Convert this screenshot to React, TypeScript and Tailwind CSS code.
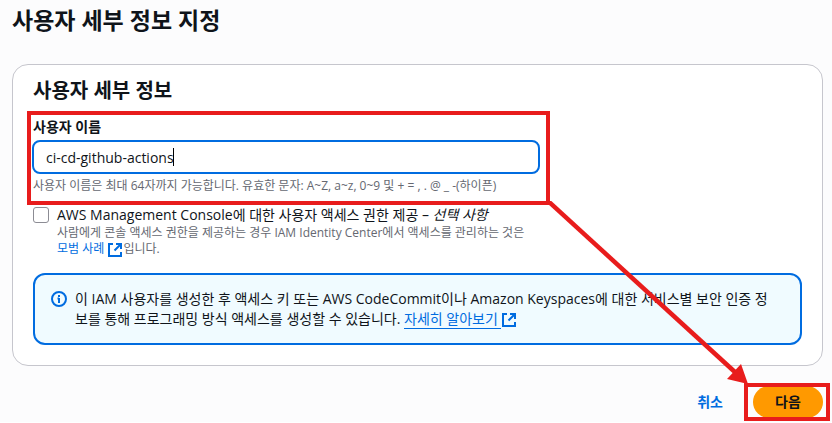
import React from "react";

function ExternalIcon({ className = "" }: { className?: string }) {
  return (
    <svg
      viewBox="0 0 16 16"
      className={`inline-block h-4 w-4 fill-none stroke-[#006ce0] stroke-2 ${className}`}
      aria-hidden="true"
    >
      <path d="M14 10v4H2V2h4" />
      <path d="M9 2h5v5M7.5 8.5L14 2" />
    </svg>
  );
}

function InfoIcon() {
  return (
    <svg viewBox="0 0 16 16" className="mt-0.5 h-4 w-4 shrink-0 fill-none stroke-[#006ce0] stroke-2" aria-hidden="true">
      <circle cx="8" cy="8" r="7" />
      <path d="M8 12V7M6.5 7.5H8" />
      <path d="M8 4v2" />
    </svg>
  );
}

export default function App() {
  return (
    <main className="relative overflow-hidden bg-[#fcfcfd] pt-1 pr-[9px] pb-1 pl-3 font-['Open_Sans','Noto_Sans_CJK_KR',sans-serif] text-sm leading-5 text-[#0f141a]">
      <h1 className="text-[23px] leading-8 font-bold">사용자 세부 정보 지정</h1>

      <section className="mt-7 rounded-2xl border border-[#c6c6cd] bg-white px-5 pt-3.5 pb-5">
        <h2 className="text-xl leading-6 font-bold">사용자 세부 정보</h2>

        <div className="relative mt-3.5 w-[507px]">
          <label htmlFor="user-name" className="block font-bold">
            사용자 이름
          </label>
          <div className="relative -ml-px mt-[3px]">
            <input
              id="user-name"
              type="text"
              defaultValue="ci-cd-github-actions"
              className="block h-[34px] w-full rounded-lg border-2 border-[#006ce0] bg-white px-3 outline-none"
            />
            <span className="absolute top-2 left-[141px] h-[18px] w-px bg-black" />
          </div>
          <p className="mt-1 text-xs leading-4 whitespace-nowrap text-[#656871]">
            사용자 이름은 최대 64자까지 가능합니다. 유효한 문자: A~Z, a~z, 0~9 및 + = , . @ _ -(하이픈)
          </p>
          <div className="pointer-events-none absolute -top-1.5 -right-[10px] -bottom-[11px] -left-1.5 border-4 border-[#e81c1c]" />
        </div>

        <div className="mt-[11px] flex gap-2">
          <input
            id="console-access"
            type="checkbox"
            className="mt-0.5 h-4 w-4 shrink-0 appearance-none rounded-[3px] border border-[#8c8c94] bg-white"
          />
          <div>
            <label htmlFor="console-access" className="block">
              AWS Management Console에 대한 사용자 액세스 권한 제공 – <em>선택 사항</em>
            </label>
            <p className="text-xs leading-4 text-[#656871]">
              사람에게 콘솔 액세스 권한을 제공하는 경우 IAM Identity Center에서 액세스를 관리하는 것은
              <br />
              <a href="#best-practice" className="text-[#006ce0]">
                모범 사례 <ExternalIcon className="align-middle" />
              </a>
              입니다.
            </p>
          </div>
        </div>

        <div className="mt-[15px] flex gap-2 rounded-xl border-2 border-[#006ce0] bg-[#f0fbff] px-4 py-3.5">
          <InfoIcon />
          <p className="break-all">
            이 IAM 사용자를 생성한 후 액세스 키 또는 AWS CodeCommit이나 Amazon Keyspaces에 대한 서비스별 보안 인증 정
            <br />
            보를 통해 프로그래밍 방식 액세스를 생성할 수 있습니다.{" "}
            <a href="#learn-more" className="text-[#006ce0]">
              <span className="border-b border-[#006ce0]">자세히 알아보기 </span>
              <ExternalIcon className="align-middle" />
            </a>
          </p>
        </div>
      </section>

      <div className="mt-5 flex justify-end gap-2.5">
        <button type="button" className="h-8 px-5 font-bold text-[#006ce0]">
          취소
        </button>
        <div className="relative">
          <button type="button" className="h-8 w-[70px] rounded-full bg-[#ff9900] font-bold text-[#0f141a]">
            다음
          </button>
          <div className="pointer-events-none absolute -top-[3px] -right-[7px] -bottom-[3px] -left-[9px] border-4 border-[#e81c1c]" />
          <svg
            viewBox="0 0 200 184"
            className="pointer-events-none absolute right-[75px] bottom-[33px] h-[184px] w-[200px] fill-[#e81c1c] stroke-[#e81c1c]"
            aria-hidden="true"
          >
            <path d="M0 0L188 172" strokeWidth="4.5" />
            <path d="M200 183L179 178L193 163Z" stroke="none" />
          </svg>
        </div>
      </div>
    </main>
  );
}
